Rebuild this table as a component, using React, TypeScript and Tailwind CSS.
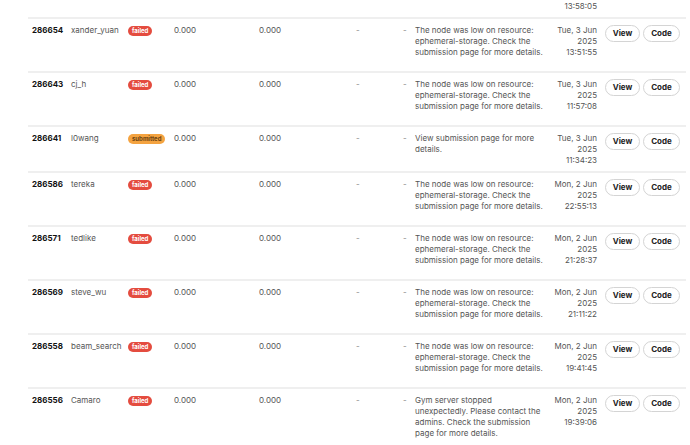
const rows = [
  {
    id: "286660",
    user: "hidden",
    status: "submitted",
    message: "View submission page for more details.",
    day: "Tue, 3 Jun",
    time: "13:58:05",
  },
  {
    id: "286654",
    user: "xander_yuan",
    status: "failed",
    message: "The node was low on resource: ephemeral-storage. Check the submission page for more details.",
    day: "Tue, 3 Jun",
    time: "13:51:55",
  },
  {
    id: "286643",
    user: "cj_h",
    status: "failed",
    message: "The node was low on resource: ephemeral-storage. Check the submission page for more details.",
    day: "Tue, 3 Jun",
    time: "11:57:08",
  },
  {
    id: "286641",
    user: "l0wang",
    status: "submitted",
    message: "View submission page for more details.",
    day: "Tue, 3 Jun",
    time: "11:34:23",
  },
  {
    id: "286586",
    user: "tereka",
    status: "failed",
    message: "The node was low on resource: ephemeral-storage. Check the submission page for more details.",
    day: "Mon, 2 Jun",
    time: "22:55:13",
  },
  {
    id: "286571",
    user: "tedlike",
    status: "failed",
    message: "The node was low on resource: ephemeral-storage. Check the submission page for more details.",
    day: "Mon, 2 Jun",
    time: "21:28:37",
  },
  {
    id: "286569",
    user: "steve_wu",
    status: "failed",
    message: "The node was low on resource: ephemeral-storage. Check the submission page for more details.",
    day: "Mon, 2 Jun",
    time: "21:11:22",
  },
  {
    id: "286558",
    user: "beam_search",
    status: "failed",
    message: "The node was low on resource: ephemeral-storage. Check the submission page for more details.",
    day: "Mon, 2 Jun",
    time: "19:41:45",
  },
  {
    id: "286556",
    user: "Camaro",
    status: "failed",
    message:
      "Gym server stopped unexpectedly. Please contact the admins. Check the submission page for more details.",
    day: "Mon, 2 Jun",
    time: "19:39:06",
  },
];

function StatusBadge({ status }: { status: string }) {
  if (status === "submitted") {
    return (
      <span className="inline-block rounded-full bg-[#f4a340] px-[4px] text-[6px] font-bold leading-[10px] text-[#6b4210]">
        submitted
      </span>
    );
  }
  return (
    <span className="inline-block rounded-full bg-[#e44c3f] px-[4px] text-[6px] font-bold leading-[10px] text-white">
      failed
    </span>
  );
}

export default function App() {
  return (
    <div className="bg-white font-['Inter',sans-serif] text-[8px] leading-[11px] text-[#555555] pl-[28px] pr-[4px] min-h-screen overflow-hidden">
      <table className="w-[658px] table-fixed border-collapse -mt-[27px]">
        <colgroup>
          <col className="w-[39px]" />
          <col className="w-[57px]" />
          <col className="w-[46px]" />
          <col className="w-[85px]" />
          <col className="w-[97px]" />
          <col className="w-[47px]" />
          <col className="w-[12px]" />
          <col className="w-[140px]" />
          <col className="w-[50px]" />
          <col className="w-[85px]" />
        </colgroup>
        <tbody>
          {rows.map((row) => (
            <tr key={row.id} className="border-b-2 border-[#efefef] align-top">
              <td className="px-[4px] py-[5.5px] font-bold text-[#111111]">{row.id}</td>
              <td className="px-[4px] py-[5.5px]">{row.user}</td>
              <td className="px-[4px] py-[5.5px]">
                <StatusBadge status={row.status} />
              </td>
              <td className="px-[4px] py-[5.5px]">0.000</td>
              <td className="px-[4px] py-[5.5px]">0.000</td>
              <td className="px-[4px] py-[5.5px] text-[#8a8a8a]">-</td>
              <td className="px-[4px] py-[5.5px] text-[#8a8a8a]">-</td>
              <td className="pl-[4px] pr-[6px] py-[5.5px]">
                <p className="mb-[8px]">{row.message}</p>
              </td>
              <td className="pl-0 pr-[4px] py-[5.5px] text-right whitespace-nowrap">
                <div>{row.day}</div>
                <div>2025</div>
                <div>{row.time}</div>
              </td>
              <td className="px-[4px] py-[5.5px]">
                <div className="flex gap-[3px]">
                  <button className="h-[17px] w-[35px] rounded-full border border-[#d4d4d4] bg-white text-[8px] font-bold text-[#222222]">
                    View
                  </button>
                  <button className="h-[17px] w-[37px] rounded-full border border-[#d4d4d4] bg-white text-[8px] font-bold text-[#222222]">
                    Code
                  </button>
                </div>
              </td>
            </tr>
          ))}
        </tbody>
      </table>
    </div>
  );
}
